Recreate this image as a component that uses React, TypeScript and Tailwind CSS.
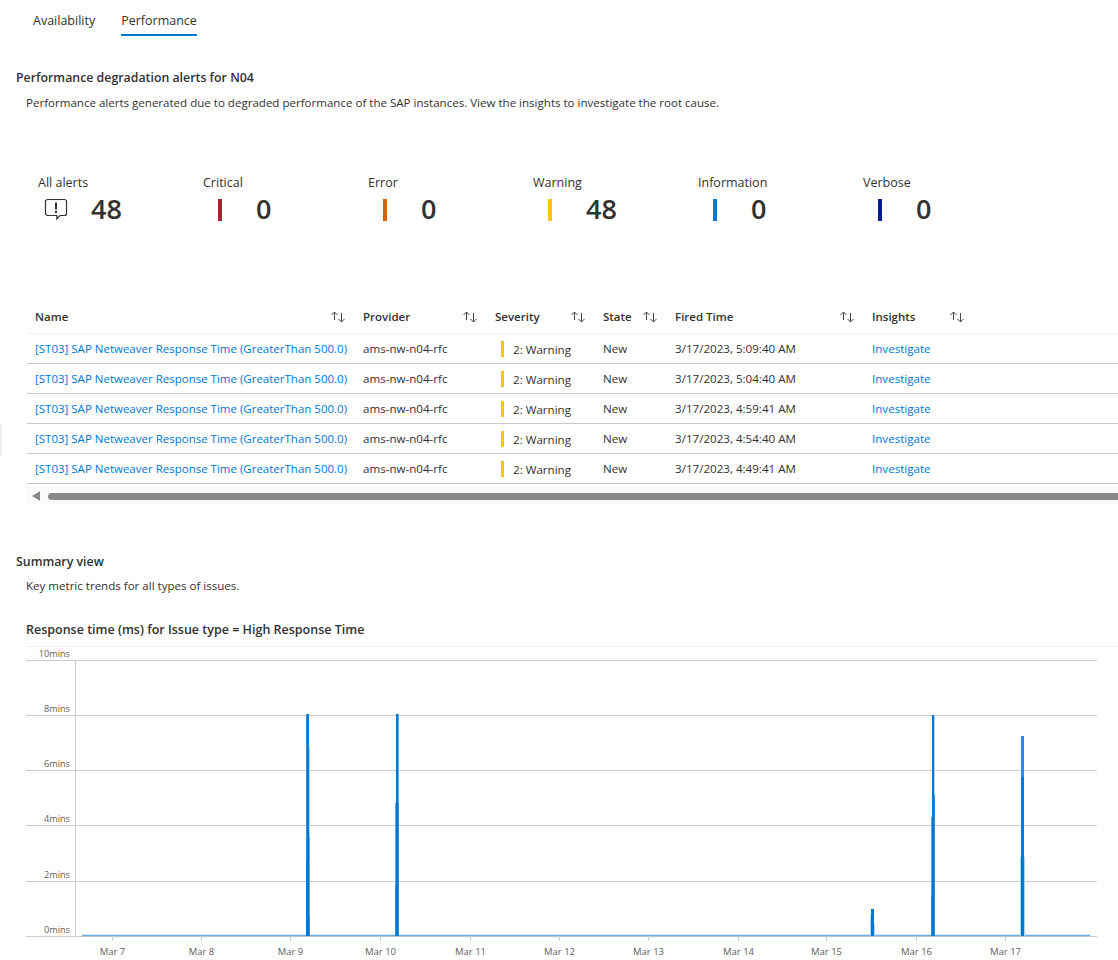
const stats = [
  { label: "All alerts", value: "48", color: "" },
  { label: "Critical", value: "0", color: "bg-[#a4262c]" },
  { label: "Error", value: "0", color: "bg-[#d95f02]" },
  { label: "Warning", value: "48", color: "bg-[#fcc419]" },
  { label: "Information", value: "0", color: "bg-[#0078d4]" },
  { label: "Verbose", value: "0", color: "bg-[#001e8c]" },
];

const rows = [
  "3/17/2023, 5:09:40 AM",
  "3/17/2023, 5:04:40 AM",
  "3/17/2023, 4:59:41 AM",
  "3/17/2023, 4:54:40 AM",
  "3/17/2023, 4:49:41 AM",
];

const columns = [
  { label: "Name", width: "w-[328px]" },
  { label: "Provider", width: "w-[132px]" },
  { label: "Severity", width: "w-[108px]" },
  { label: "State", width: "w-[72px]" },
  { label: "Fired Time", width: "w-[197px]" },
  { label: "Insights", width: "w-[110px]" },
];

const yLabels = ["10mins", "8mins", "6mins", "4mins", "2mins", "0mins"];
const gridY = [660.5, 715.5, 770.5, 825.5, 881.5, 936.5];

const xTicks = [
  { x: 112.5, label: "Mar 7" },
  { x: 201.5, label: "Mar 8" },
  { x: 290.5, label: "Mar 9" },
  { x: 380.5, label: "Mar 10" },
  { x: 470.5, label: "Mar 11" },
  { x: 559.5, label: "Mar 12" },
  { x: 648.5, label: "Mar 13" },
  { x: 738.5, label: "Mar 14" },
  { x: 826.5, label: "Mar 15" },
  { x: 916.5, label: "Mar 16" },
  { x: 1005.5, label: "Mar 17" },
];

const DARK = "#0078d4";
const MID = "#2e8cdb";
const SOFT = "#5aa9e5";
const PALE = "#a8d3f3";

// each spike is a few overlapping one-pixel columns: [x, width, top, bottom, colour]
const spikes: [number, number, number, number, string][] = [
  [306, 1, 714, 862, MID],
  [307, 2, 714, 936, DARK],
  [306, 1, 862, 936, DARK],
  [309, 1, 747, 837, PALE],
  [309, 1, 837, 918, SOFT],
  [309, 1, 918, 936, MID],

  [396, 2, 714, 936, DARK],
  [398, 1, 714, 803, SOFT],
  [398, 1, 803, 936, MID],
  [395, 1, 803, 885, SOFT],
  [395, 1, 885, 936, MID],

  [871, 3, 909, 936, DARK],
  [870, 1, 915, 936, PALE],
  [874, 1, 925, 936, PALE],

  [932, 2, 715, 936, DARK],
  [934, 1, 715, 795, PALE],
  [934, 1, 795, 936, MID],
  [931, 1, 817, 895, SOFT],
  [931, 1, 895, 936, MID],

  [1021, 3, 736, 777, MID],
  [1021, 3, 777, 936, DARK],
  [1020, 1, 857, 936, PALE],
  [1024, 1, 857, 936, PALE],
];

function SortIcon() {
  return (
    <svg width="16" height="12" viewBox="0 0 16 12" fill="none" stroke="#444" strokeWidth="1" aria-hidden="true">
      <path d="M4.5 9V1M1.5 4L4.5 1l3 3" />
      <path d="M11.5 2v9M8.5 8l3 3 3-3" />
    </svg>
  );
}

function AlertIcon() {
  return (
    <svg width="24" height="24" viewBox="0 0 24 24" fill="none" aria-hidden="true">
      <path
        d="M3.5 2.5h17a2 2 0 0 1 2 2v12a2 2 0 0 1-2 2h-4.5l-3.2 3.5v-3.5H3.5a2 2 0 0 1-2-2v-12a2 2 0 0 1 2-2z"
        stroke="#323130"
        strokeWidth="1.2"
      />
      <path d="M12 5.5v7" stroke="#323130" strokeWidth="2" />
      <circle cx="12" cy="15" r="1.2" fill="#323130" />
    </svg>
  );
}

function Stat({ label, value, color }: (typeof stats)[number]) {
  return (
    <div className="w-[165px]">
      <div className="text-[12.5px] leading-[17px] text-[#323130]">{label}</div>
      <div className="flex h-[36px] items-center">
        <div className="flex w-[53px] pl-[6px]">
          {color ? <div className={`ml-[9px] mt-[1px] h-[22px] w-[4px] ${color}`} /> : <AlertIcon />}
        </div>
        <div className="text-[27px] font-semibold leading-[36px] text-[#323130]">{value}</div>
      </div>
    </div>
  );
}

function Row({ time }: { time: string }) {
  return (
    <div className="flex h-[30px] items-center border-b border-[#c8c8c8] text-[11.6px] text-[#323130]">
      <div className="w-[328px] pl-[8px]">
        <a className="text-[11.5px] text-[#0078d4]">[ST03] SAP Netweaver Response Time (GreaterThan 500.0)</a>
      </div>
      <div className="w-[132px] pl-[8px]">ams-nw-n04-rfc</div>
      <div className="flex w-[108px] items-center pl-[14px]">
        <div className="mt-[2px] h-[16px] w-[3px] bg-[#fcc419]" />
        <span className="ml-[9px] mt-[2px]">2: Warning</span>
      </div>
      <div className="w-[72px] pl-[8px]">New</div>
      <div className="w-[197px] pl-[8px]">{time}</div>
      <div className="w-[110px] pl-[8px]">
        <a className="text-[#0078d4]">Investigate</a>
      </div>
    </div>
  );
}

function Chart() {
  return (
    <svg width="1118" height="320" viewBox="0 640 1118 320" className="mt-[1px] block" aria-label="Response time chart">
      <line x1="26" x2="1118" y1="646.5" y2="646.5" stroke="#eeeeee" />
      {gridY.map((y, i) => (
        <g key={y}>
          <line x1="26" x2="1097" y1={y} y2={y} stroke="#cccccc" />
          <text x="70" y={y - 4} textAnchor="end" fontSize="9.2" fill="#605e5c">
            {yLabels[i]}
          </text>
        </g>
      ))}
      <line x1="75.5" x2="75.5" y1="660" y2="936" stroke="#cccccc" />
      {xTicks.map((t) => (
        <g key={t.label}>
          <line x1={t.x} x2={t.x} y1="936" y2="941" stroke="#cccccc" />
          <text x={t.x} y="955" textAnchor="middle" fontSize="9.5" fill="#605e5c">
            {t.label}
          </text>
        </g>
      ))}
      <line x1="82" x2="1090" y1="935.5" y2="935.5" stroke="#6aaee6" strokeWidth="1.5" />
      {spikes.map(([x, w, top, bottom, fill]) => (
        <rect key={`${x}-${top}`} x={x} y={top} width={w} height={bottom - top} fill={fill} />
      ))}
    </svg>
  );
}

export default function App() {
  return (
    <div className="relative h-[960px] w-[1118px] overflow-hidden bg-white [font-family:'Open_Sans',sans-serif] text-[#323130]">
      <nav className="flex h-[36px] gap-[26px] pl-[33px] text-[12.5px]">
        <div className="h-[36px] pt-[12px] leading-[18px]">Availability</div>
        <div className="h-[36px] border-b-2 border-[#0078d4] pt-[12px] leading-[18px]">Performance</div>
      </nav>

      <section className="pt-[33px]">
        <h2 className="pl-[16px] text-[12.35px] font-semibold leading-[18px]">Performance degradation alerts for N04</h2>
        <p className="mt-[7px] pl-[26px] text-[11.55px] leading-[18px]">
          Performance alerts generated due to degraded performance of the SAP instances. View the insights to
          investigate the root cause.
        </p>
      </section>

      <div className="flex pl-[38px] pt-[62px]">
        {stats.map((s) => (
          <Stat key={s.label} {...s} />
        ))}
      </div>

      <div className="ml-[27px] mt-[75px]">
        <div className="flex h-[32px] items-center border-b border-[#eeeeee] pb-[2px] text-[11.5px] font-semibold">
          {columns.map((c) => (
            <div key={c.label} className={`flex items-center justify-between pl-[8px] pr-[9px] ${c.width}`}>
              <span>{c.label}</span>
              <SortIcon />
            </div>
          ))}
        </div>
        {rows.map((t) => (
          <Row key={t} time={t} />
        ))}
        <div className="mt-[3px] flex h-[18px] items-center bg-[#fafafa] pl-[5px]">
          <div className="h-0 w-0 border-y-[5px] border-r-[8px] border-y-transparent border-r-[#8a8a8a]" />
          <div className="ml-[8px] h-[7px] flex-1 rounded-l-[4px] bg-[#8a8a8a]" />
        </div>
      </div>

      <section className="pt-[48px]">
        <h2 className="pl-[16px] text-[12.35px] font-semibold leading-[18px]">Summary view</h2>
        <p className="mt-[6px] pl-[26px] text-[11.55px] leading-[18px]">Key metric trends for all types of issues.</p>
        <h3 className="mt-[26px] pl-[26px] text-[12.5px] font-semibold leading-[18px]">
          Response time (ms) for Issue type = High Response Time
        </h3>
      </section>

      <Chart />

      <div className="absolute left-0 top-[425px] h-[30px] w-[2px] bg-[#eeeeee]" />
    </div>
  );
}
